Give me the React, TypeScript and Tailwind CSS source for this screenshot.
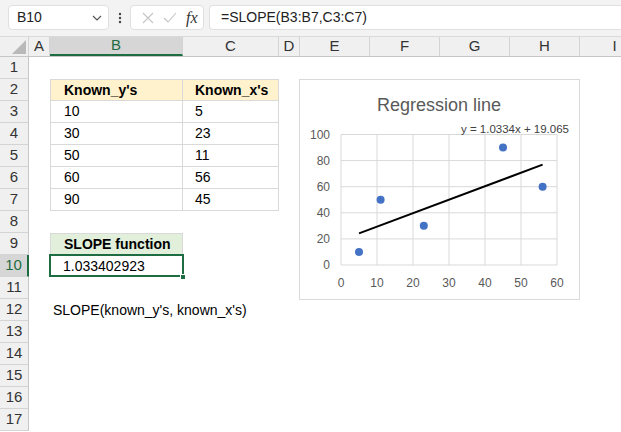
import React from "react";

const COLS = [
  { k: "A", w: 21 },
  { k: "B", w: 133 },
  { k: "C", w: 96 },
  { k: "D", w: 21 },
  { k: "E", w: 70 },
  { k: "F", w: 70 },
  { k: "G", w: 70 },
  { k: "H", w: 70 },
  { k: "I", w: 70 },
];

const font = { fontFamily: '"Liberation Sans", Arial, sans-serif' };

function Chart() {
  const px = (x: number) => 41 + x * 3.6;
  const py = (v: number) => 185 - v * 1.305;
  const pts = [
    [5, 10],
    [23, 30],
    [11, 50],
    [56, 60],
    [45, 90],
  ];
  const ys = [0, 20, 40, 60, 80, 100];
  const xs = [0, 10, 20, 30, 40, 50, 60];
  return (
    <div className="absolute left-[299px] top-[22px] w-[281px] h-[221px] bg-white border border-[#d9d9d9]">
      <svg width="279" height="219" viewBox="0 0 279 219" style={font}>
        <text x="139" y="31" textAnchor="middle" fontSize="18" fill="#595959">
          Regression line
        </text>
        {ys.map((v) => (
          <line key={"h" + v} x1={41} x2={257} y1={py(v)} y2={py(v)} stroke="#d9d9d9" strokeWidth="1" />
        ))}
        {xs.map((v) => (
          <line key={"v" + v} x1={px(v)} x2={px(v)} y1={py(100)} y2={py(0)} stroke="#d9d9d9" strokeWidth="1" />
        ))}
        {ys.map((v) => (
          <text key={"yl" + v} x="30" y={py(v) + 4} textAnchor="end" fontSize="12" fill="#595959">
            {v}
          </text>
        ))}
        {xs.map((v) => (
          <text key={"xl" + v} x={px(v)} y="207" textAnchor="middle" fontSize="12" fill="#595959">
            {v}
          </text>
        ))}
        <line
          x1={px(5)}
          y1={py(1.0334 * 5 + 19.065)}
          x2={px(56)}
          y2={py(1.0334 * 56 + 19.065)}
          stroke="#000"
          strokeWidth="2"
        />
        {pts.map(([x, y], i) => (
          <circle key={i} cx={px(x)} cy={py(y)} r="4" fill="#4472c4" />
        ))}
        <text x="269" y="53" textAnchor="end" fontSize="11.5" fill="#404040">
          y = 1.0334x + 19.065
        </text>
      </svg>
    </div>
  );
}

type CellDef = {
  text?: string;
  cls?: string;
};

function rowCells(r: number): Record<string, CellDef> {
  const tb = "border-r border-b border-[#d9d9d9]";
  const data: Record<number, [string, string]> = {
    3: ["10", "5"],
    4: ["30", "23"],
    5: ["50", "11"],
    6: ["60", "56"],
    7: ["90", "45"],
  };
  if (r === 2)
    return {
      B: { text: "Known_y's", cls: `bg-[#fff2cc] font-bold pl-[13px] border-t border-l ${tb}` },
      C: { text: "Known_x's", cls: `bg-[#fff2cc] font-bold pl-[12px] border-t ${tb}` },
    };
  if (data[r])
    return {
      B: { text: data[r][0], cls: `pl-[13px] border-l ${tb}` },
      C: { text: data[r][1], cls: `pl-[12px] ${tb}` },
    };
  if (r === 9)
    return {
      B: { text: "SLOPE function", cls: "bg-[#e2efda] font-bold pl-[13px] border-t border-l border-r border-[#d9d9d9]" },
    };
  if (r === 10)
    return {
      B: { text: "1.033402923", cls: "pl-[13px] relative" },
    };
  if (r === 12)
    return {
      B: { text: "SLOPE(known_y's, known_x's)", cls: "pl-[3px] whitespace-nowrap overflow-visible" },
    };
  return {};
}

export default function App() {
  const rows = Array.from({ length: 17 }, (_, i) => i + 1);
  return (
    <div className="w-[621px] h-[432px] overflow-hidden bg-white text-black" style={font}>
      {/* formula bar */}
      <div className="h-[37px] bg-[#f3f3f3] flex items-start pt-[5px] pl-[8px] border-b border-[#dadada]">
        <div className="w-[101px] h-[25px] bg-white border border-[#e0e0e0] rounded-[4px] flex items-center pl-[8px] pr-[6px] justify-between">
          <span className="text-[14px] text-[#222]">B10</span>
          <svg width="10" height="6" viewBox="0 0 10 6">
            <path d="M1 1l4 4 4-4" fill="none" stroke="#555" strokeWidth="1.2" />
          </svg>
        </div>
        <div className="w-[21px] h-[25px] flex items-center justify-center">
          <svg width="4" height="12" viewBox="0 0 4 12">
            <circle cx="2" cy="2" r="1.2" fill="#444" />
            <circle cx="2" cy="6" r="1.2" fill="#444" />
            <circle cx="2" cy="10" r="1.2" fill="#444" />
          </svg>
        </div>
        <div className="w-[74px] h-[25px] bg-white border border-[#e0e0e0] rounded-[4px] flex items-center pl-[11px] gap-[9px]">
          <svg width="12" height="12" viewBox="0 0 12 12">
            <path d="M1 1l10 10M11 1L1 11" stroke="#c4c4c4" strokeWidth="1.1" />
          </svg>
          <svg width="14" height="11" viewBox="0 0 14 11">
            <path d="M1 6l4 4 8-9" fill="none" stroke="#c4c4c4" strokeWidth="1.1" />
          </svg>
          <span
            className="text-[16px] italic text-[#333] leading-none"
            style={{ fontFamily: '"Liberation Serif", "Times New Roman", serif' }}
          >
            fx
          </span>
        </div>
        <div className="ml-[5px] flex-1 h-[25px] bg-white border border-[#e0e0e0] rounded-l-[4px] border-r-0 flex items-center pl-[11px]">
          <span className="text-[14px] text-[#222]">=SLOPE(B3:B7,C3:C7)</span>
        </div>
      </div>
      {/* column headers */}
      <div className="flex h-[20px] bg-[#f0f0f0] border-b border-[#c6c6c6]">
        <div className="w-[29px] shrink-0 border-r border-[#d4d4d4] relative">
          <svg className="absolute left-[12px] top-[3px]" width="14" height="14" viewBox="0 0 14 14">
            <path d="M14 0L14 14L0 14Z" fill="#b9b9b9" />
          </svg>
        </div>
        {COLS.map((c) => (
          <div
            key={c.k}
            style={{ width: c.w }}
            className={
              "shrink-0 flex items-center justify-center text-[15px] border-r border-[#d4d4d4] " +
              (c.k === "B" ? "bg-[#d6d6d6] text-[#1e6c41] border-b-2 border-b-[#1e6c41]" : "text-[#333]")
            }
          >
            {c.k}
          </div>
        ))}
      </div>
      {/* grid */}
      <div className="relative">
        {rows.map((r) => {
          const cells = rowCells(r);
          return (
            <div key={r} className="flex h-[22px]">
              <div
                className={
                  "w-[29px] shrink-0 flex items-center justify-center text-[15px] border-b border-[#d4d4d4] " +
                  (r === 10
                    ? "bg-[#d6d6d6] text-[#1e6c41] border-r-2 border-r-[#1e6c41]"
                    : "bg-[#f0f0f0] text-[#333] border-r border-r-[#c6c6c6]")
                }
              >
                {r}
              </div>
              {COLS.map((c) => {
                const cd = cells[c.k];
                return (
                  <div
                    key={c.k}
                    style={{ width: c.w }}
                    className={"shrink-0 h-[22px] flex items-center text-[14px] " + (cd?.cls ?? "")}
                  >
                    {cd?.text}
                    {r === 10 && c.k === "B" && (
                      <>
                        <div className="absolute -left-[1px] -top-[1px] -right-[1px] -bottom-[0px] border-2 border-[#1e6c41] pointer-events-none" />
                        <div className="absolute -right-[3px] -bottom-[3px] w-[6px] h-[6px] bg-[#1e6c41] border border-white" />
                      </>
                    )}
                  </div>
                );
              })}
            </div>
          );
        })}
        <Chart />
      </div>
    </div>
  );
}
